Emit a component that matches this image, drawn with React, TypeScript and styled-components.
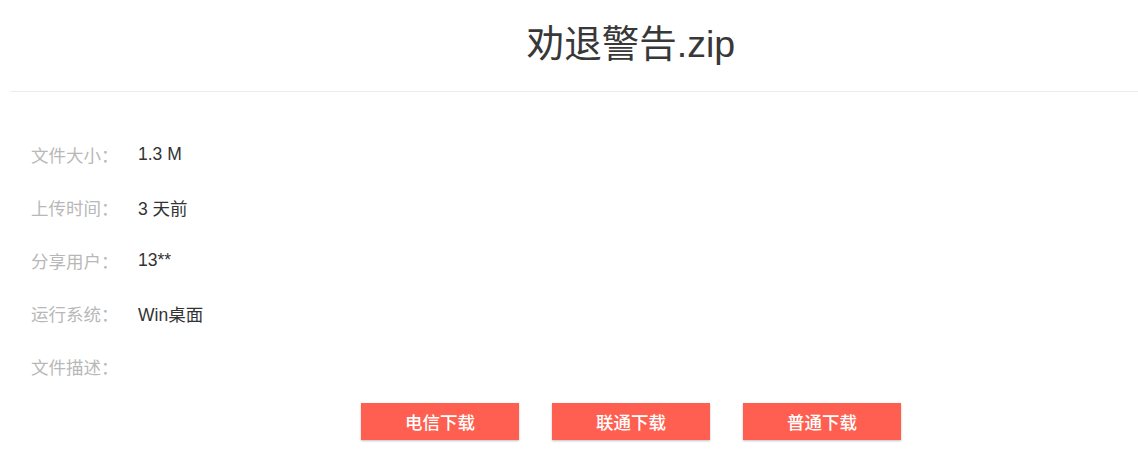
import React from "react";
import styled, { createGlobalStyle } from "styled-components";

const Global = createGlobalStyle`
  html, body { margin: 0; padding: 0; background: #ffffff; }
  body { font-family: "Liberation Sans", "Noto Sans CJK SC", sans-serif; }
`;

const Page = styled.div`
  width: 1138px;
  height: 463px;
  overflow: hidden;
  background: #fff;
`;

const Header = styled.div`
  margin-left: 10px;
  height: 92px;
  box-sizing: border-box;
  border-bottom: 1px solid #ececec;
  padding-left: 114px;
  text-align: center;
`;

const Title = styled.h1`
  margin: 0;
  font-weight: 400;
  font-size: 37.5px;
  line-height: 88px;
  color: #383838;
`;

const Info = styled.div`
  padding: 36px 0 0 31px;
  display: flex;
  flex-direction: column;
`;

const Row = styled.div`
  display: flex;
  align-items: center;
  height: 53px;
  font-size: 17.5px;
`;

const Label = styled.span`
  width: 107px;
  color: #b8b8b8;
  flex-shrink: 0;
`;

const Value = styled.span`
  color: #333;
`;

const Actions = styled.div`
  display: flex;
  justify-content: center;
  gap: 33px;
  margin-top: 10px;
  padding-left: 124px;
`;

const Button = styled.button`
  width: 158px;
  height: 37px;
  border: none;
  padding: 0;
  background: #ff5f50;
  color: #fff;
  font-family: "Liberation Sans", "Noto Sans CJK SC", sans-serif;
  font-size: 17.5px;
  font-weight: 500;
  box-shadow: 0 1px 2px rgba(0, 0, 0, 0.25);
  cursor: pointer;
`;

const rows: [string, string][] = [
  ["文件大小：", "1.3 M"],
  ["上传时间：", "3 天前"],
  ["分享用户：", "13**"],
  ["运行系统：", "Win桌面"],
  ["文件描述：", ""],
];

export default function App() {
  return (
    <Page>
      <Global />
      <Header>
        <Title>劝退警告.zip</Title>
      </Header>
      <Info>
        {rows.map(([l, v]) => (
          <Row key={l}>
            <Label>{l}</Label>
            <Value>{v}</Value>
          </Row>
        ))}
      </Info>
      <Actions>
        <Button>电信下载</Button>
        <Button>联通下载</Button>
        <Button>普通下载</Button>
      </Actions>
    </Page>
  );
}
